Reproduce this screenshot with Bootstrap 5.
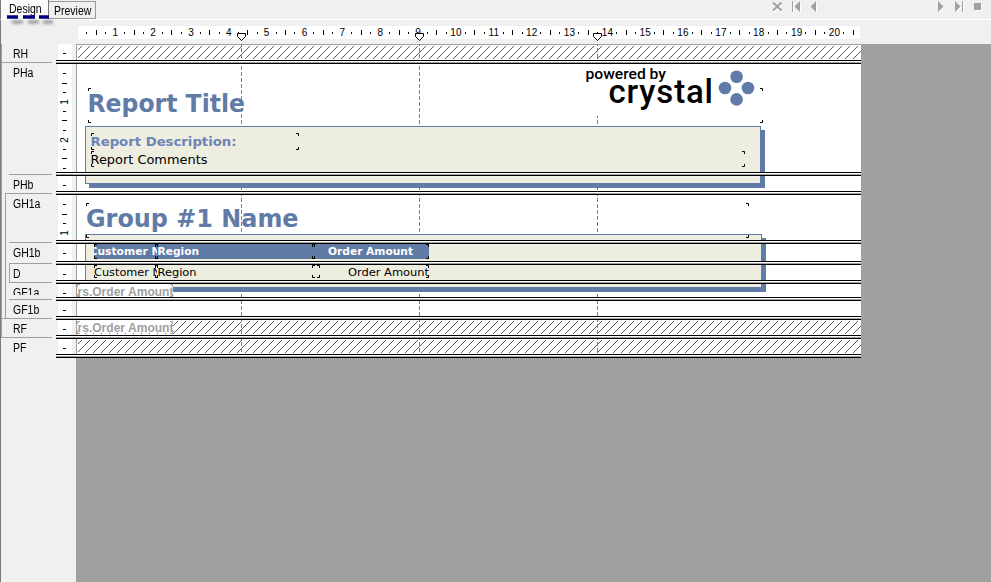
<!DOCTYPE html>
<html lang="en">
<head>
<meta charset="utf-8">
<meta name="viewport" content="width=device-width, initial-scale=1">
<title>Report Designer</title>
<link href="https://cdn.jsdelivr.net/npm/bootstrap@5.3.0/dist/css/bootstrap.min.css" rel="stylesheet">
<style>
body{font-family:"Liberation Sans",Arial,sans-serif;font-size:12px;color:#000;background:#f0f0f0;height:582px}
svg{display:block}
.narrow{display:block;width:max-content;transform:scaleX(.875);transform-origin:0 0}
.topbar{height:20px;border-bottom:1px solid #fff;border-left:1px solid #7a7a7a}
.tab-design{width:48px;height:19px;line-height:18px;padding-left:8px;background:#fbfbfb;border-right:1px solid #777}
.tab-preview{width:47px;height:18px;line-height:18px;margin-top:1px;padding-left:5px;border:1px solid #999;border-left:0}
.dashmark{left:-1px;top:10px}
.hruler{height:24px;padding-left:77px;border-left:1px solid #7a7a7a}
.labels{width:56px;border-left:1px solid #7a7a7a;flex:none;
  background:linear-gradient(#a0a0a0,#a0a0a0) 0 0/1px 294px no-repeat,linear-gradient(#a0a0a0,#a0a0a0) 4px 149px/1px 126px no-repeat,linear-gradient(#a0a0a0,#a0a0a0) 8px 219px/1px 19px no-repeat}
.labels>div{border-top:1px solid #a0a0a0;margin-right:4px;line-height:15px;padding-top:3px;overflow:hidden;flex:none}
.labels>.first{border-top-color:transparent;padding-top:2px}
.labels>.squeezed{clip-path:polygon(0 0,100% 0,100% 1px,0 1px,0 6px,100% 6px,100% 13px,0 13px)}
.stage{width:805px;flex:none}
.vr-strip{width:14px;margin-left:2px;flex:none;background:#fff}
.sheet{margin-left:4px;flex:1;background:#fff;border-left:1px solid #a0a0a0}
.sep{height:4px;background:linear-gradient(#000 0 1px,#fff 1px 2px,#a0a0a0 2px 3px,#000 3px);position:relative;z-index:3}
.objects{left:20px;top:0;z-index:2}
.desk{background:#a0a0a0}
.desk-below{margin-left:20px}
</style>
</head>
<body class="d-flex flex-column overflow-hidden m-0">
<header class="topbar d-flex position-relative flex-shrink-0">
  <div class="tab-design"><span class="narrow">Design</span></div>
  <div class="tab-preview"><span class="narrow">Preview</span></div>
  <svg class="ms-auto" width="225" height="18" viewBox="766 0 225 18">
    <g stroke="#fff" fill="#fff" transform="translate(1 1)">
      <path d="M773 3L781 11M781 3L773 11" stroke-width="1.8"/><path d="M792.500 1V12" stroke-width="1.3"/>
      <path d="M800 1V12L794.500 6.500ZM816 1V12L810.500 6.500ZM938 1V12L943.500 6.500ZM955 1V12L960.500 6.500Z" stroke="none"/><path d="M962.500 1V12" stroke-width="1.3"/><path d="M974 3h7v7h-7z" stroke="none"/>
    </g>
    <g stroke="#a0a0a0" fill="#a0a0a0">
      <path d="M773 2.500L781.500 10.500M781.500 2.500L773 10.500" stroke-width="1.9"/><path d="M792.500 1V12"/>
      <path d="M800 1V12L794.500 6.500ZM816 1V12L810.500 6.500ZM938 1V12L943.500 6.500ZM955 1V12L960.500 6.500Z" stroke="none"/><path d="M962.500 1V12"/><path d="M974 3h7v7h-7z" stroke="none"/>
    </g>
  </svg>
  <svg class="dashmark position-absolute" width="70" height="22" viewBox="0 10 70 22">
    <defs><filter id="soft" filterUnits="userSpaceOnUse" x="0" y="12" width="70" height="20"><feGaussianBlur stdDeviation="1.5"/></filter></defs>
    <path d="M12 22H23M28 22H39M43 22H53" stroke="#888" stroke-width="4" filter="url(#soft)" opacity=".75"/>
    <path d="M7 17H18M23 17H35M39 17H49" stroke="#000080" stroke-width="3.500"/>
  </svg>
</header>
<div class="hruler flex-shrink-0"><svg id="hr" width="782" height="24" viewBox="78 20 782 24" overflow="visible"><rect x="78" y="26" width="782" height="13" fill="#fff"/></svg></div>
<main class="d-flex flex-grow-1">
  <div class="labels d-flex flex-column" id="labels"></div>
  <div class="d-flex flex-grow-1">
    <div class="stage position-relative d-flex flex-column">
      <div id="sections"></div>
      <div class="desk desk-below flex-grow-1"></div>
      <svg class="objects position-absolute" width="785" height="314" viewBox="76 44 785 314" id="objs">
        <defs>
          <pattern id="hatchp" width="8" height="8" patternUnits="userSpaceOnUse" patternTransform="translate(4 0)"><path d="M-1 9L9 -1M-1 1L1 -1M7 9L9 7" stroke="#333" stroke-width=".8"/></pattern>
        </defs>
        <path d="M76 44.500H861" stroke="#a0a0a0"/>
        <g fill="url(#hatchp)"><rect width="783" height="13" transform="translate(78 46)"/><rect width="783" height="13" transform="translate(78 321)"/><rect width="783" height="13" transform="translate(78 340)"/></g>
        <path d="M241.500 42V358M419.500 42V358M597.500 42V358" stroke="#808080" stroke-dasharray="4 2"/>
        <g fill="#5f7ba6">
          <rect x="89" y="130" width="676" height="58"/><rect x="89" y="238" width="677" height="54"/>
          <g fill="#eeeee0" stroke="#5f7ba6"><rect x="85.500" y="126.500" width="675" height="57"/><rect x="85.500" y="234.500" width="676" height="53"/></g>
          <rect x="94" y="244" width="335" height="15"/>
          <rect x="585" y="65" width="176" height="51" fill="#fff"/>
          <circle cx="736.600" cy="76.700" r="6.300"/><circle cx="725" cy="88" r="6.300"/><circle cx="748" cy="88" r="6.300"/><circle cx="736.600" cy="99.400" r="6.300"/>
        </g>
        <g font-family="Roboto,'Noto Sans',sans-serif" font-weight="500">
          <text x="585.500" y="79" font-size="14.500" textLength="80.500" lengthAdjust="spacingAndGlyphs">powered by</text>
          <text x="608.500" y="102.500" font-size="33" textLength="104.500" lengthAdjust="spacing">crystal</text>
        </g>
        <g font-family="'DejaVu Sans',Verdana,sans-serif">
          <g fill="#5f7ba6" font-weight="700">
            <text x="87.500" y="111.500" font-size="24.500" textLength="157.500" lengthAdjust="spacingAndGlyphs">Report Title</text>
            <text x="86" y="226.500" font-size="24.500" textLength="212.500" lengthAdjust="spacingAndGlyphs">Group #1 Name</text>
            <text x="90.500" y="146" font-size="13" textLength="146" lengthAdjust="spacingAndGlyphs" fill="#6d83b8">Report Description:</text>
          </g>
          <text x="90.500" y="164" font-size="13" textLength="117" lengthAdjust="spacingAndGlyphs">Report Comments</text>
          <g fill="#fff" font-weight="700" font-size="11">
            <svg x="94" y="244" width="63" height="15" viewBox="94 244 63 15"><text x="89.500" y="255" textLength="71" lengthAdjust="spacingAndGlyphs">Customer N</text></svg>
            <text x="157.500" y="255" textLength="41.500" lengthAdjust="spacingAndGlyphs">Region</text>
            <text x="328" y="255" textLength="85" lengthAdjust="spacingAndGlyphs">Order Amount</text>
          </g>
          <g font-size="11">
            <svg x="94" y="264" width="63" height="16" viewBox="94 264 63 16"><text x="94" y="276" textLength="67" lengthAdjust="spacingAndGlyphs">Customer N</text></svg>
            <text x="157.500" y="276" textLength="39" lengthAdjust="spacingAndGlyphs">Region</text>
            <text x="348" y="276" textLength="81" lengthAdjust="spacingAndGlyphs">Order Amount</text>
          </g>
        </g>
        <g font-family="'Liberation Sans',Arial,sans-serif" font-weight="700" font-size="12">
          <rect x="77" y="284" width="96" height="13" fill="#fff"/><rect x="77" y="321" width="96" height="12" fill="#fff"/>
          <text x="77.500" y="296" fill="#a0a0a0" textLength="96" lengthAdjust="spacingAndGlyphs">rs.Order Amount</text>
          <text x="77.500" y="332" fill="#a0a0a0" textLength="96" lengthAdjust="spacingAndGlyphs">rs.Order Amount</text>
        </g>
      </svg>
    </div>
    <div class="desk flex-grow-1"></div>
  </div>
</main>
<script src="https://cdn.jsdelivr.net/npm/bootstrap@5.3.0/dist/js/bootstrap.bundle.min.js"></script>
<script>
const NS='http://www.w3.org/2000/svg';
function el(parent,name,attrs,txt){const e=document.createElementNS(NS,name);for(const k in attrs)e.setAttribute(k,attrs[k]);if(txt!==undefined)e.textContent=txt;parent.appendChild(e);return e}
const CM=37.85;
// horizontal ruler
const hr=document.getElementById('hr');
for(let q=1;q<=82;q++){
  const x=77.3+q*CM/4;
  if(q%4===0)el(hr,'text',{x:x+.2,y:36,'font-size':10,'text-anchor':'middle','letter-spacing':'.2'},q/4);
  else if(q%2===0)el(hr,'rect',{x:Math.floor(x),y:30,width:1,height:5});
  else el(hr,'rect',{x:Math.floor(x),y:32,width:1,height:2});
}
[241,419,597].forEach(x=>el(hr,'path',{d:`M${x-3.5} 33.500h8v3l-4 4l-4 -4z`,fill:'#fff',stroke:'#000'}));
// sections: name, label height, label indent, body height
const rows=[['RH',18,1,16],['PHa',112,1,108],['PHb',19,8,15],['GH1a',49,4,45],['GH1b',21,8,17],['D',19,8,15],['GF1a',17,8,13],['GF1b',19,8,15],['RF',19,0,15],['PF',245,0,15]];
const labels=document.getElementById('labels'),sections=document.getElementById('sections');
rows.forEach(([name,h,ind,bh],i)=>{
  const l=document.createElement('div');l.style.height=h+'px';l.style.marginLeft=ind+'px';
  if(i===0)l.className='first';
  if(name==='GF1a')l.className='squeezed';
  l.innerHTML=`<span class="narrow">${name}</span>`;l.firstChild.style.marginLeft=(12-ind)+'px';labels.appendChild(l);
  const s=document.createElement('div');s.className='d-flex';s.style.height=bh+'px';
  s.innerHTML='<div class="vr-strip"></div><div class="sheet"></div>';sections.appendChild(s);
  const v=el(s.firstChild,'svg',{width:14,height:bh});
  for(let q=1;q*CM/4<bh-3||q===1;q++){
    const y=Math.round(q*CM/4-.4);
    if(q%4===0)el(v,'text',{transform:`translate(10 ${y+1}) rotate(-90)`,'font-size':10,'text-anchor':'middle'},q/4);
    else if(q%2===0)el(v,'rect',{x:4,y:y,width:5,height:1});
    else el(v,'rect',{x:5,y:y,width:3,height:1});
  }
  const p=document.createElement('div');p.className='sep';sections.appendChild(p);
});
// corner handles of report objects
const objs=document.getElementById('objs');
function corners(x1,y1,x2,y2,c='#000'){
  el(objs,'path',{d:`M${x1+.5} ${y1+3}v-2.500h2.500M${x2-2} ${y1+.5}h2.500v2.500M${x1+.5} ${y2-2}v2.500h2.500M${x2-2} ${y2+.5}h2.500v-2.500`,fill:'none',stroke:c});
}
corners(88,88,762,122);corners(91,133,298,149);corners(91,151,744,166);corners(86,203,748,237);
corners(94,244,157,258);corners(155,244,314,258);corners(312,244,428,258);
corners(94,265,157,277);corners(155,265,319,277);corners(312,265,428,277);
corners(77,284,172,296,'#a0a0a0');corners(77,321,172,333,'#a0a0a0');
</script>
</body>
</html>
